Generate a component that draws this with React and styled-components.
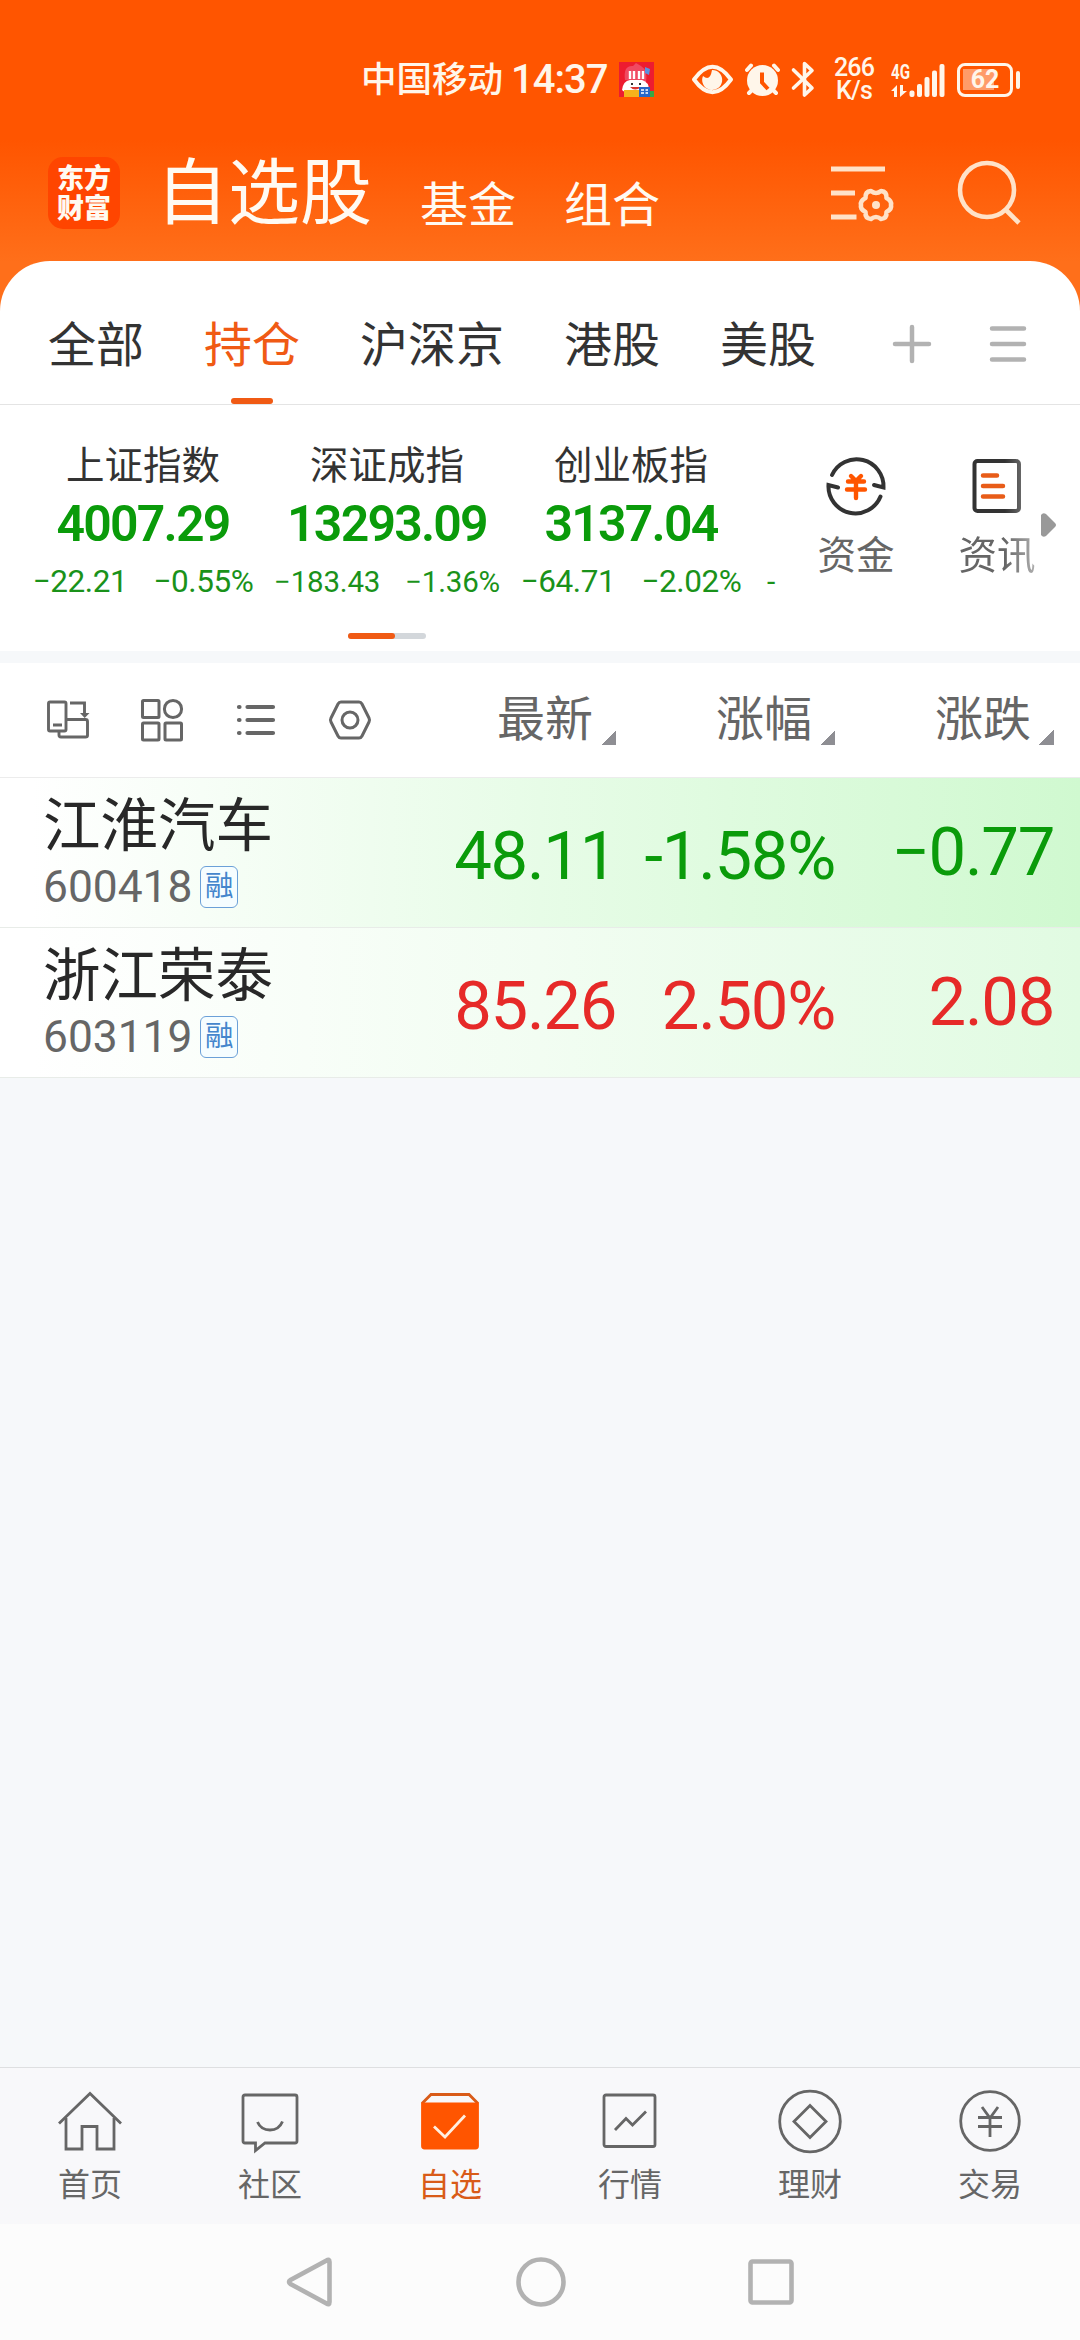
import React from 'react';
import styled, { createGlobalStyle } from 'styled-components';

const GlobalStyle = createGlobalStyle`
  * {
    box-sizing: border-box;
  }
  body {
    margin: 0;
    background: #f6f8fa;
    font-family: Roboto, 'Noto Sans CJK SC', sans-serif;
  }
  svg {
    display: block;
    flex: none;
  }
`;

const Screen = styled.div`
  display: flex;
  flex-direction: column;
  width: 1080px;
  height: 2340px;
  overflow: hidden;
  background: linear-gradient(#ff5500 0, #ff5500 140px, #ff6f1a 262px, #ff6f1a 320px, #f6f8fa 320px);
`;

const StatusBar = styled.div`
  display: flex;
  align-items: center;
  height: 119px;
  padding: 40px 60px 0 361px;
  color: #fff6ea;
`;
const Carrier = styled.div`
  width: 150px;
  padding-top: 1px;
  font-size: 35.5px;
  font-weight: 500;
  line-height: 50px;
  white-space: nowrap;
`;
const Clock = styled.div`
  width: 108px;
  padding-top: 1px;
  font-size: 40px;
  font-weight: 500;
  letter-spacing: -1px;
  line-height: 50px;
`;
const NetSpeed = styled.div`
  width: 44px;
  margin: 0 15px 0 14px;
  font-size: 25px;
  font-weight: 500;
  line-height: 22.5px;
  letter-spacing: -0.8px;
  text-align: center;
`;
const Signal = styled.div`
  display: flex;
  align-items: flex-end;
  width: 66px;
`;
const Battery = styled.div`
  display: flex;
  align-items: center;
  justify-content: center;
  width: 56px;
  height: 34px;
  border: 3.5px solid #fff6ea;
  border-radius: 8px;
  font-size: 25px;
  font-weight: 700;
  background: linear-gradient(#ff9c68, #ff9c68) 3px 3px / 31px 21px no-repeat;
`;
const BatteryTip = styled.div`
  width: 4px;
  height: 18px;
  margin-left: 3px;
  border-radius: 2px;
  background: #fff6ea;
`;

const Header = styled.div`
  display: flex;
  height: 142px;
  padding-left: 48px;
  color: #fffaf2;
`;
const Logo = styled.div`
  width: 72px;
  height: 72px;
  margin-top: 38px;
  padding-top: 5px;
  border-radius: 15px;
  background: #ff4500;
  font-family: 'Noto Sans CJK SC', sans-serif;
  font-size: 27px;
  font-weight: 900;
  line-height: 30px;
  text-align: center;
`;
const Title = styled.div`
  width: 264px;
  margin: 23px 0 0 36px;
  font-size: 72px;
  line-height: 104px;
`;
const HeaderLink = styled.div`
  width: 144px;
  margin-top: 52px;
  font-size: 48px;
  line-height: 70px;
`;
const HeaderIcons = styled.div`
  display: flex;
  gap: 60px;
  margin: 41px 0 0 122px;
`;

const Panel = styled.div`
  height: 390px;
  border-radius: 50px 50px 0 0;
  background: #fff;
`;
const GroupTabs = styled.div`
  display: flex;
  gap: 60px;
  height: 144px;
  padding-left: 48px;
  border-bottom: 1px solid #e4e4e4;
`;
const GroupTab = styled.div`
  display: flex;
  flex-direction: column;
  align-items: center;
  height: 143px;
  padding-top: 50px;
  font-size: 48px;
  line-height: 70px;
  color: ${({ $active }) => ($active ? '#f05a14' : '#333')};

  &::after {
    content: '';
    width: 42px;
    height: 6px;
    margin-top: auto;
    border-radius: 3px;
    background: ${({ $active }) => ($active ? '#f05a14' : 'transparent')};
  }
`;
const GroupActions = styled.div`
  display: flex;
  gap: 56px;
  margin: 63px 0 0 16px;
`;

const IndexBar = styled.div`
  display: flex;
  height: 246px;
`;
const IndexScroller = styled.div`
  width: 777px;
  padding: 36px 0 0 21px;
  overflow: hidden;
`;
const IndexList = styled.div`
  display: grid;
  grid-template-columns: repeat(3, 244px) 20px;
`;
const IndexItem = styled.div`
  display: flex;
  flex-direction: column;
  align-items: center;
  white-space: nowrap;
`;
const IndexName = styled.div`
  font-size: 38.5px;
  line-height: 50px;
  color: #333;
`;
const IndexValue = styled.div`
  font-size: 50px;
  font-weight: 600;
  line-height: 60px;
  margin-top: 3px;
  letter-spacing: -1.8px;
  color: #0a9b0a;
`;
const IndexChange = styled.div`
  display: flex;
  gap: ${({ $small }) => ($small ? 25 : 26)}px;
  height: 40px;
  margin-top: 8px;
  font-size: ${({ $small }) => ($small ? 29.5 : 31.5)}px;
  line-height: 40px;
  letter-spacing: ${({ $small }) => ($small ? -0.2 : -0.4)}px;
  color: #1a921a;
`;
const NextIndex = styled.div`
  margin-top: 121px;
  padding-left: 14px;
  font-size: 30px;
  line-height: 40px;
  color: #1a921a;
`;
const Pager = styled.div`
  width: 78px;
  height: 6px;
  margin: 31px 0 0 327px;
  border-radius: 3px;
  background: #d3d7db;

  &::before {
    content: '';
    display: block;
    width: 47px;
    height: 6px;
    border-radius: 3px;
    background: #f05a14;
  }
`;
const Shortcut = styled.div`
  display: flex;
  flex-direction: column;
  align-items: center;
  width: 80px;
  margin: 48px 0 0 ${({ $left }) => $left}px;
  font-size: 38.5px;
  line-height: 50px;
  color: #666;
  mask-image: ${({ $faded }) =>
    $faded ? 'linear-gradient(90deg, #000 60%, rgba(0, 0, 0, 0.5))' : 'none'};

  svg {
    margin-bottom: 14px;
  }
`;
const MoreArrow = styled.svg`
  margin: 107px 0 0 4px;
`;

const ListHeader = styled.div`
  display: flex;
  height: 115px;
  margin-top: 12px;
  border-bottom: 1px solid #ececec;
  background: #fff;
`;
const ViewModes = styled.div`
  display: flex;
  align-items: center;
  gap: 50px;
  width: 397px;
  padding-left: 46px;
`;
const ColumnTitle = styled.div`
  display: flex;
  justify-content: flex-end;
  width: 219px;
  padding-top: 22px;
  font-size: 48px;
  line-height: 70px;
  color: #666;

  &::after {
    content: '';
    width: 15px;
    height: 15px;
    margin: 45px 0 0 8px;
    background: linear-gradient(135deg, transparent 50%, #8e8e93 50%);
  }
`;

const StockRow = styled.div`
  display: flex;
  height: 150px;
  border-bottom: 1px solid #e8ece8;
  background: linear-gradient(90deg, #fff 3%, ${({ $mid }) => $mid} 50%, ${({ $end }) => $end}),
    #fff;
`;
const StockInfo = styled.div`
  width: 397px;
  padding: 15px 0 0 43px;
`;
const StockName = styled.div`
  font-size: 57.5px;
  line-height: 68px;
  color: #282828;
`;
const StockCode = styled.div`
  display: flex;
  align-items: center;
  gap: 8px;
  margin-top: 4px;
  font-size: 44.3px;
  line-height: 44px;
  color: #666;
`;
const MarginTag = styled.div`
  width: 38px;
  height: 42px;
  border: 1.5px solid #6ba0d8;
  border-radius: 6px;
  font-size: 28.5px;
  line-height: 40px;
  text-align: center;
  background: #f5fdff;
  color: #4486cc;
`;
const Quote = styled.div`
  width: 219px;
  padding-top: ${({ $raised }) => ($raised ? 34 : 38)}px;
  font-size: 67px;
  line-height: 80px;
  letter-spacing: -1.3px;
  text-align: right;
  white-space: nowrap;
  color: ${({ $up }) => ($up ? '#e62a28' : '#0a9b0a')};
`;

const Blank = styled.div`
  flex: 1;
`;
const BottomTabs = styled.div`
  display: grid;
  grid-template-columns: repeat(6, 1fr);
  height: 157px;
  border-top: 1px solid #dedfe1;
  background: #f8f8fa;
`;
const BottomTab = styled.div`
  display: flex;
  flex-direction: column;
  align-items: center;
  padding-top: 20px;
  font-size: 32px;
  line-height: 48px;
  color: ${({ $active }) => ($active ? '#d95b18' : '#666')};

  svg {
    margin-bottom: 7px;
  }
`;
const SystemNav = styled.div`
  display: flex;
  justify-content: center;
  align-items: center;
  gap: 180px;
  height: 116px;
  background: #fcfcfc;
`;

const indexes = [
  { name: '上证指数', value: '4007.29', diff: '−22.21', rate: '−0.55%' },
  { name: '深证成指', value: '13293.09', diff: '−183.43', rate: '−1.36%', small: true },
  { name: '创业板指', value: '3137.04', diff: '−64.71', rate: '−2.02%' },
];

const stocks = [
  {
    name: '江淮汽车',
    code: '600418',
    price: '48.11',
    rate: '-1.58%',
    diff: '−0.77',
    mid: '#e7fce7',
    end: '#d0f9d0',
  },
  {
    name: '浙江荣泰',
    code: '603119',
    price: '85.26',
    rate: '2.50%',
    diff: '2.08',
    up: true,
    mid: '#f2fdf2',
    end: '#e1fbe2',
  },
];

const bottomTabs = [
  {
    label: '首页',
    icon: (
      <>
        <path d="M1 35.5 32 5.5 63 35.5" />
        <path d="M8 30V61H24V38.5H39V61H56V30" />
      </>
    ),
  },
  {
    label: '社区',
    icon: (
      <>
        <path d="M7 7H57Q59 7 59 9V53Q59 55 57 55H27L17.5 62.5V55H7Q5 55 5 53V9Q5 7 7 7Z" />
        <path d="M19.5 34Q23 42 32 42T44.5 33.5" />
      </>
    ),
  },
  {
    label: '自选',
    active: true,
    icon: (
      <>
        <path d="M4 15.5 13 6.5H51L60 15.5" fill="#f8f8fa" />
        <path
          d="M4.5 16H59.5V58Q59.5 60 57.5 60H6.5Q4.5 60 4.5 58Z"
          fill="#ff5500"
          stroke="#ff5500"
        />
        <path d="M16 38.5 27 49 47 27.5" stroke="#ffefe0" />
      </>
    ),
  },
  {
    label: '行情',
    icon: (
      <>
        <rect x="6" y="7" width="51" height="51.5" rx="2" />
        <path d="M17 42 28 30.5 34.5 37 48 23.5" />
      </>
    ),
  },
  {
    label: '理财',
    icon: (
      <>
        <circle cx="32" cy="33.5" r="30.3" />
        <path d="M32 17.5 48 33.5 32 49.5 16 33.5Z" />
      </>
    ),
  },
  {
    label: '交易',
    icon: (
      <>
        <circle cx="32" cy="33" r="29.3" />
        <path d="M24 19 32 30 40 19M20 29.5H44M20 38.5H44M32 29.5V49" />
      </>
    ),
  },
];

const StatusIcons = () => (
  <svg width="164" height="40" viewBox="654 60 164 40" fill="#fff6ea">
    <path
      d="M694 79.5Q712.5 54 731 79.5Q712.5 105 694 79.5Z"
      fill="none"
      stroke="#fff6ea"
      strokeWidth="4"
      strokeLinejoin="round"
    />
    <path d="M712 70a10 10 0 1 1-9 6q7 6 9-6Z" />
    <g stroke="#fff6ea" strokeWidth="4" strokeLinecap="round">
      <path d="M747 70 751 65.5M778 70 774 65.5M749 93 754 88M776 93 771 88" />
    </g>
    <circle cx="762.5" cy="80.5" r="15.5" />
    <path d="M762 72.5V82.5L768 89" fill="none" stroke="#ff5500" strokeWidth="4" />
    <path
      d="M793.5 70 812 88 804.5 95V63.5L812 70.5 793.5 88"
      fill="none"
      stroke="#fff6ea"
      strokeWidth="3.6"
      strokeLinecap="round"
      strokeLinejoin="round"
    />
  </svg>
);

const SalePicture = () => (
  <svg width="35" height="35" viewBox="0 0 35 35">
    <rect width="35" height="35" fill="#ed1c30" />
    <path d="M6 18Q4 3 14 4L17 1 22 4Q29 8 27 20Z" fill="#f04a62" />
    <path d="M11 9V17M15 9V17M20 9V17M24 9V17" stroke="#fff" strokeWidth="2.4" />
    <path d="M3 28Q4 19 11 18H23Q30 20 30 28L27 32H8Z" fill="#fff" />
    <path d="M12 22H14M20 22H22" stroke="#333" strokeWidth="2" />
    <path d="M11 25H22Q16 30 11 25Z" fill="#d93530" />
    <path d="M26 5 31 7 30 13 26 11Z" fill="#5c8fe0" />
    <rect x="5" y="28" width="15" height="7" fill="#f6b21b" />
    <rect x="20" y="25" width="11" height="10" fill="#2867c8" />
    <path d="M31 29H35V35H31Z" fill="#39a845" />
    <path d="M22 28H25M26.5 28H29M22 31H25M26.5 31H29" stroke="#fff" strokeWidth="1.4" />
  </svg>
);

export default function App() {
  return (
    <Screen>
      <GlobalStyle />
      <StatusBar>
        <Carrier>中国移动</Carrier>
        <Clock>14:37</Clock>
        <SalePicture />
        <StatusIcons />
        <NetSpeed>
          266
          <br />
          K/s
        </NetSpeed>
        <Signal>
          <svg width="56" height="44" viewBox="0 -5 56 44" fill="#fff6ea">
            <text
              x="0"
              y="16"
              fontSize="20"
              fontWeight="700"
              textLength="19"
              lengthAdjust="spacingAndGlyphs"
            >
              4G
            </text>
            <path d="M0 28 6 22V34H3V28ZM9 22H12V28H16L9 34Z" />
            <rect x="18.5" y="27.5" width="5" height="6.5" rx="2" />
            <rect x="26" y="21" width="5" height="13" rx="2" />
            <rect x="33.5" y="14" width="5" height="20" rx="2" />
            <rect x="41" y="7.5" width="5" height="26.5" rx="2" />
            <rect x="48.5" y="1" width="5" height="33" rx="2" />
          </svg>
        </Signal>
        <Battery>62</Battery>
        <BatteryTip />
      </StatusBar>

      <Header>
        <Logo>
          东方
          <br />
          财富
        </Logo>
        <Title>自选股</Title>
        <HeaderLink>基金</HeaderLink>
        <HeaderLink>组合</HeaderLink>
        <HeaderIcons>
          <svg width="66" height="66" viewBox="830 160 66 66" fill="none" stroke="#ffe2c8">
            <path d="M831 169H885M831 193H855M831 217H856.5" strokeWidth="5" />
            <path
              d="M871 191Q876 195 881 191Q887 191.500 886.500 198Q892 201 891 205Q892 209 886.500 212Q887 218.500 881 219Q876 215 871 219Q865 218.500 865.500 212Q860 209 861 205Q860 201 865.500 198Q865 191.500 871 191Z"
              strokeWidth="4.6"
              strokeLinejoin="round"
            />
            <circle cx="876" cy="205" r="4" fill="#ffe2c8" stroke="none" />
          </svg>
          <svg width="66" height="70" viewBox="956 160 66 70" fill="none" stroke="#ffe2c8">
            <circle cx="987" cy="190" r="27" strokeWidth="4.6" />
            <path d="M1005 209 1019 223" strokeWidth="4.6" />
          </svg>
        </HeaderIcons>
      </Header>

      <Panel>
        <GroupTabs>
          <GroupTab>全部</GroupTab>
          <GroupTab $active>持仓</GroupTab>
          <GroupTab>沪深京</GroupTab>
          <GroupTab>港股</GroupTab>
          <GroupTab>美股</GroupTab>
          <GroupActions>
            <svg width="40" height="40" stroke="#b2b2b2" strokeWidth="4.5" strokeLinecap="round">
              <path d="M3 20H37M20 3V37" />
            </svg>
            <svg width="40" height="40" stroke="#b2b2b2" strokeWidth="4.5" strokeLinecap="round">
              <path d="M4 4.5H36M4 20H36M4 35.5H36" />
            </svg>
          </GroupActions>
        </GroupTabs>

        <IndexBar>
          <IndexScroller>
            <IndexList>
              {indexes.map((item) => (
                <IndexItem key={item.name}>
                  <IndexName>{item.name}</IndexName>
                  <IndexValue>{item.value}</IndexValue>
                  <IndexChange $small={item.small}>
                    <span>{item.diff}</span>
                    <span>{item.rate}</span>
                  </IndexChange>
                </IndexItem>
              ))}
              <NextIndex>-</NextIndex>
            </IndexList>
            <Pager />
          </IndexScroller>
          <Shortcut $left={39}>
            <svg width="64" height="64" viewBox="-32 -32 64 64" fill="none" strokeLinecap="round">
              <g stroke="#333" strokeWidth="4">
                <path d="M-24-10A27 27 0 0 1 27.500 2.500L18 0" />
                <path d="M24.500 11.500A27 27 0 0 1-27.500 0L-18 2.500" />
              </g>
              <path
                d="M-5-9 0-4 5-9M-8-3.5H8M-9 4.5H9M0-4V13"
                stroke="#ff5500"
                strokeWidth="4.4"
              />
            </svg>
            资金
          </Shortcut>
          <Shortcut $left={61} $faded>
            <svg width="64" height="64" fill="none" strokeLinecap="round">
              <rect x="9.5" y="8" width="44.5" height="50" rx="3" stroke="#333" strokeWidth="4" />
              <path d="M18 22.5H32M18 33H38M18 43.5H38" stroke="#e85c18" strokeWidth="4.5" />
            </svg>
            资讯
          </Shortcut>
          <MoreArrow width="16" height="26" fill="#999">
            <path d="M0 3Q2 0 5 2L14 11Q16 13 14 15L5 24Q2 26 0 23Z" />
          </MoreArrow>
        </IndexBar>
      </Panel>

      <ListHeader>
        <ViewModes>
          <svg width="44" height="44" fill="none" stroke="#666" strokeWidth="2.9">
            <rect x="2.5" y="4" width="17.5" height="29" rx="1.5" />
            <path d="M7 27H16M24 5H38.5V17M20 21.5H39.5Q41.5 21.5 41.5 23.5V37.5Q41.5 39 39.5 39H15Q13 39 13 37V33" />
            <path d="M34 15H43.5L38.7 20Z" fill="#666" stroke="none" />
          </svg>
          <svg width="44" height="44" fill="none" stroke="#666" strokeWidth="3">
            <rect x="2.5" y="2.5" width="16.5" height="17" rx="1" />
            <circle cx="33" cy="11" r="8.6" />
            <rect x="2.5" y="25" width="16.5" height="17" rx="1" />
            <rect x="25" y="25" width="16.5" height="17" rx="1" />
          </svg>
          <svg width="44" height="44" fill="none" stroke="#666" strokeWidth="4.2" strokeLinecap="round">
            <path d="M5 9H5.5M5 22H5.5M5 35H5.5M13.5 9H39M13.5 22H39M13.5 35H39" />
          </svg>
          <svg width="44" height="44" fill="none" stroke="#666" strokeWidth="3">
            <path d="M13 4H31Q33 4 34 6L41 20Q42 22 41 24L34 38Q33 40 31 40H13Q11 40 10 38L3 24Q2 22 3 20L10 6Q11 4 13 4Z" />
            <circle cx="22" cy="22" r="8" />
          </svg>
        </ViewModes>
        <ColumnTitle>最新</ColumnTitle>
        <ColumnTitle>涨幅</ColumnTitle>
        <ColumnTitle>涨跌</ColumnTitle>
      </ListHeader>

      {stocks.map((stock) => (
        <StockRow key={stock.code} $mid={stock.mid} $end={stock.end}>
          <StockInfo>
            <StockName>{stock.name}</StockName>
            <StockCode>
              {stock.code}
              <MarginTag>融</MarginTag>
            </StockCode>
          </StockInfo>
          <Quote $up={stock.up}>{stock.price}</Quote>
          <Quote $up={stock.up}>{stock.rate}</Quote>
          <Quote $up={stock.up} $raised>
            {stock.diff}
          </Quote>
        </StockRow>
      ))}

      <Blank />

      <BottomTabs>
        {bottomTabs.map((tab) => (
          <BottomTab key={tab.label} $active={tab.active}>
            <svg width="64" height="66" fill="none" stroke="currentColor" strokeWidth="2.8">
              {tab.icon}
            </svg>
            {tab.label}
          </BottomTab>
        ))}
      </BottomTabs>
      <SystemNav>
        <svg width="50" height="52" fill="none" stroke="#b2b2b2" strokeWidth="4.6">
          <path d="M41.5 4.5Q44.5 2.5 44.5 6V46Q44.5 49.5 41.5 47.5L5.5 28Q2.5 26 5.5 24Z" />
        </svg>
        <svg width="52" height="52" fill="none" stroke="#b2b2b2" strokeWidth="4.6">
          <circle cx="26" cy="26" r="22.5" />
        </svg>
        <svg width="48" height="52" fill="none" stroke="#b2b2b2" strokeWidth="4.6">
          <rect x="3.5" y="5.5" width="41" height="41" rx="2" />
        </svg>
      </SystemNav>
    </Screen>
  );
}
